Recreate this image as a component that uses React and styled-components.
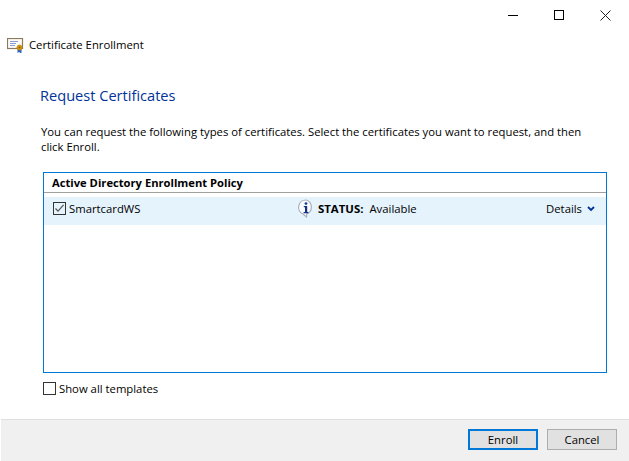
import React from "react";
import styled, { createGlobalStyle } from "styled-components";

const Global = createGlobalStyle`
  html, body { margin: 0; padding: 0; background: #fff; }
  body { font-family: "Open Sans", "Noto Sans", "Liberation Sans", sans-serif; font-size: 11.3px; color: #000; }
`;
const Win = styled.div`width: 629px; height: 461px; display: flex; flex-direction: column; overflow: hidden; background: #fff;`;
const Controls = styled.div`height: 30px; display: flex; justify-content: flex-end; flex: none; padding-right: 1px;`;
const Ctl = styled.div`width: 46px; height: 30px; display: flex; align-items: center; justify-content: center;`;
const TitleRow = styled.div`display: flex; align-items: center; gap: 5px; height: 16px; padding: 7px 0 0 7px; flex: none;`;
const TitleText = styled.span`line-height: 16px; color: #000;`;
const Heading = styled.h1`margin: 32px 0 0 40px; font-size: 14.6px; font-weight: 400; line-height: 20px; color: #003399;`;
const Intro = styled.p`margin: 19px 40px 0 41px; width: 548px; line-height: 15px;`;
const Panel = styled.section`margin: 18px 22px 0 43px; height: 201px; box-sizing: border-box; border: 1px solid #0078d7; flex: none;`;
const PanelHead = styled.div`height: 20px; box-sizing: border-box; border-bottom: 1px solid #a0a0a0; padding-left: 8px; font-weight: 700; line-height: 20px; font-size: 11.2px;`;
const Row = styled.div`margin-top: 4px; height: 28px; box-sizing: border-box; background: #e5f3fd; display: grid; grid-template-columns: 244px 1fr auto; align-items: center; padding: 0 11px 5px 9px;`;
const CheckLabel = styled.label`display: flex; align-items: center; gap: 3px;`;
const Box = styled.span`width: 11px; height: 11px; border: 1px solid #333; display: flex; align-items: center; justify-content: center; flex: none;`;
const Status = styled.div`display: flex; align-items: center;`;
const StatusKey = styled.b`margin-left: 3px; font-weight: 700; font-size: 11.4px;`;
const StatusVal = styled.span`margin-left: 6px;`;
const Details = styled.div`display: flex; align-items: center; gap: 5px;`;
const Templates = styled.label`display: flex; align-items: center; gap: 3px; margin: 8px 0 0 43px; height: 15px;`;
const Spacer = styled.div`flex: 1;`;
const Footer = styled.footer`height: 42px; margin-left: 1px; box-sizing: border-box; border-top: 1px solid #dfdfdf; background: #f0f0f0; display: flex; justify-content: flex-end; gap: 9px; padding: 9px 12px 0 0;`;
const Btn = styled.button`width: 70px; height: 21px; box-sizing: border-box; background: #e1e1e1; border: ${p => p.$primary ? "2px solid #0078d7" : "1px solid #adadad"}; padding: 0; font: inherit; color: #000; line-height: 1;`;

const Cert = () => (
  <svg width="17" height="15" viewBox="0 0 17 15">
    <rect x="0.5" y="0.5" width="15" height="10" fill="#fdfdf6" stroke="#8b7a5e" strokeWidth="1.2" />
    <path d="M3 3.5h8M3 5.5h6M3 7.5h5" stroke="#8c9bd6" strokeWidth="1" />
    <path d="M10.5 11v4l1.5-1 1.5 1 1 0v-4z" fill="#2a62c9" />
    <circle cx="12.5" cy="9.5" r="2.6" fill="#d99a10" stroke="#b67c08" strokeWidth=".6" />
    <circle cx="12.5" cy="9.5" r=".9" fill="#8a5a04" />
  </svg>
);
const Info = () => (
  <svg width="18" height="19" viewBox="0 0 18 19">
    <path d="M9 1a7.3 7.3 0 0 0-3 14l3.5 3 .3-3.2A7.3 7.3 0 0 0 9 1z" fill="#fafbfd" stroke="#a9b1bc" strokeWidth="1.2" />
    <circle cx="9" cy="4.6" r="1.4" fill="#1a3f9c" />
    <path d="M6.8 7h3.4v6h1.2v1.2H6.6V13H8V8.2H6.8z" fill="#10308a" />
  </svg>
);
const Tick = () => (
  <svg width="11" height="11" viewBox="0 0 11 11"><path d="M1.5 5.5 4 8.2 9.6 1.8" fill="none" stroke="#555" strokeWidth="1.2" /></svg>
);

export default function App() {
  return (
    <Win>
      <Global />
      <Controls>
        <Ctl><svg width="10" height="10" viewBox="0 0 10 10"><path d="M0 5.5h10" stroke="#000" /></svg></Ctl>
        <Ctl><svg width="10" height="10" viewBox="0 0 10 10"><rect x=".5" y=".5" width="9" height="9" fill="none" stroke="#000" /></svg></Ctl>
        <Ctl><svg width="11" height="11" viewBox="0 0 11 11"><path d="M.5.5l10 10M10.5.5l-10 10" stroke="#222" /></svg></Ctl>
      </Controls>
      <TitleRow><Cert /><TitleText>Certificate Enrollment</TitleText></TitleRow>
      <Heading>Request Certificates</Heading>
      <Intro>You can request the following types of certificates. Select the certificates you want to request, and then click Enroll.</Intro>
      <Panel>
        <PanelHead>Active Directory Enrollment Policy</PanelHead>
        <Row>
          <CheckLabel><Box><Tick /></Box>SmartcardWS</CheckLabel>
          <Status><Info /><StatusKey>STATUS:</StatusKey><StatusVal>Available</StatusVal></Status>
          <Details>Details
            <svg width="8" height="6" viewBox="0 0 8 6"><path d="M1 1l3 3 3-3" fill="none" stroke="#003399" strokeWidth="1.8" /></svg>
          </Details>
        </Row>
      </Panel>
      <Templates><Box />Show all templates</Templates>
      <Spacer />
      <Footer>
        <Btn $primary>Enroll</Btn>
        <Btn>Cancel</Btn>
      </Footer>
    </Win>
  );
}
